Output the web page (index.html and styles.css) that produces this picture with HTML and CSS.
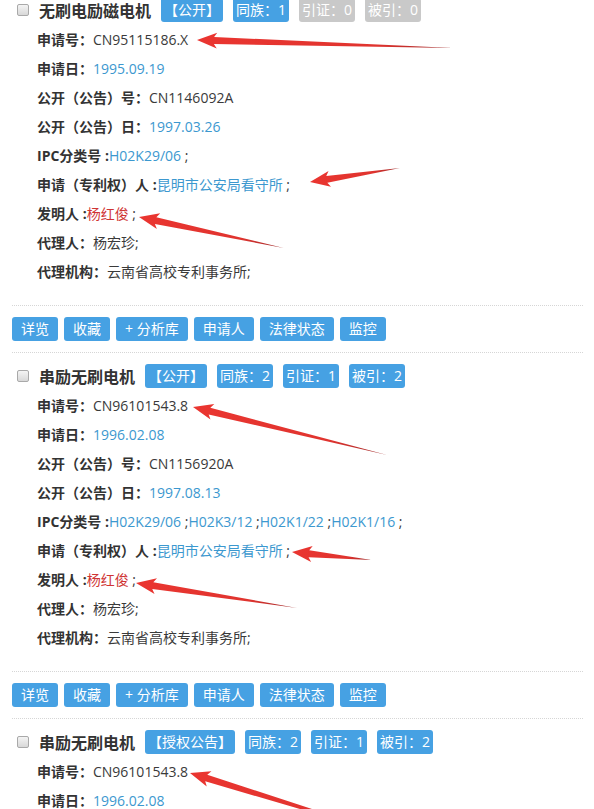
FILE: index.html
```html
<!DOCTYPE html>
<html lang="zh-CN">
<head>
<meta charset="utf-8">
<title>专利检索结果</title>
<link rel="stylesheet" href="styles.css">
</head>
<body>
<div class="page">

  <div class="record">
    <div class="title-row">
      <input type="checkbox" class="pick">
      <span class="title">无刷电励磁电机</span>
      <span class="tag">【公开】</span>
      <span class="tag">同族：1</span>
      <span class="tag off">引证：0</span>
      <span class="tag off">被引：0</span>
    </div>
    <div class="fields">
      <div class="field"><b>申请号：</b><span class="val">CN95115186.X</span></div>
      <div class="field"><b>申请日：</b><span class="link">1995.09.19</span></div>
      <div class="field"><b>公开（公告）号：</b><span class="val">CN1146092A</span></div>
      <div class="field"><b>公开（公告）日：</b><span class="link">1997.03.26</span></div>
      <div class="field"><b>IPC分类号 :</b><span class="link">H02K29/06</span><span class="val"> ;</span></div>
      <div class="field"><b>申请（专利权）人 :</b><span class="link">昆明市公安局看守所</span><span class="val"> ;</span></div>
      <div class="field"><b>发明人 :</b><span class="red">杨红俊</span><span class="val"> ;</span></div>
      <div class="field"><b>代理人：</b><span class="val">杨宏珍;</span></div>
      <div class="field"><b>代理机构：</b><span class="val">云南省高校专利事务所;</span></div>
    </div>
    <div class="actions">
      <button class="btn">详览</button>
      <button class="btn">收藏</button>
      <button class="btn">+ 分析库</button>
      <button class="btn">申请人</button>
      <button class="btn">法律状态</button>
      <button class="btn">监控</button>
    </div>
  </div>

  <div class="record">
    <div class="title-row">
      <input type="checkbox" class="pick">
      <span class="title">串励无刷电机</span>
      <span class="tag">【公开】</span>
      <span class="tag">同族：2</span>
      <span class="tag">引证：1</span>
      <span class="tag">被引：2</span>
    </div>
    <div class="fields">
      <div class="field"><b>申请号：</b><span class="val">CN96101543.8</span></div>
      <div class="field"><b>申请日：</b><span class="link">1996.02.08</span></div>
      <div class="field"><b>公开（公告）号：</b><span class="val">CN1156920A</span></div>
      <div class="field"><b>公开（公告）日：</b><span class="link">1997.08.13</span></div>
      <div class="field"><b>IPC分类号 :</b><span class="link">H02K29/06</span><span class="val"> ;</span><span class="link">H02K3/12</span><span class="val"> ;</span><span class="link">H02K1/22</span><span class="val"> ;</span><span class="link">H02K1/16</span><span class="val"> ;</span></div>
      <div class="field"><b>申请（专利权）人 :</b><span class="link">昆明市公安局看守所</span><span class="val"> ;</span></div>
      <div class="field"><b>发明人 :</b><span class="red">杨红俊</span><span class="val"> ;</span></div>
      <div class="field"><b>代理人：</b><span class="val">杨宏珍;</span></div>
      <div class="field"><b>代理机构：</b><span class="val">云南省高校专利事务所;</span></div>
    </div>
    <div class="actions">
      <button class="btn">详览</button>
      <button class="btn">收藏</button>
      <button class="btn">+ 分析库</button>
      <button class="btn">申请人</button>
      <button class="btn">法律状态</button>
      <button class="btn">监控</button>
    </div>
  </div>

  <div class="record">
    <div class="title-row">
      <input type="checkbox" class="pick">
      <span class="title">串励无刷电机</span>
      <span class="tag">【授权公告】</span>
      <span class="tag">同族：2</span>
      <span class="tag">引证：1</span>
      <span class="tag">被引：2</span>
    </div>
    <div class="fields">
      <div class="field"><b>申请号：</b><span class="val">CN96101543.8</span></div>
      <div class="field"><b>申请日：</b><span class="link">1996.02.08</span></div>
    </div>
  </div>

</div>

<!-- red callout arrows drawn over the list -->
<svg class="marks" width="594" height="809" viewBox="0 0 594 809">
  <defs>
    <linearGradient id="arrowFill" x1="0" y1="0" x2="1" y2="0">
      <stop offset="0" stop-color="#ea3530"/>
      <stop offset="0.7" stop-color="#e0342f"/>
      <stop offset="1" stop-color="#9c2a2a"/>
    </linearGradient>
  </defs>
  <g fill="url(#arrowFill)">
    <g transform="translate(197 40) rotate(1.8)"><polygon points="0,0 20,-8 17,-3.5 256,0 17,3.5 20,8"/></g>
    <g transform="translate(310 182) rotate(-8.8)"><polygon points="0,0 20,-8 17,-3.5 91,0 17,3.5 20,8"/></g>
    <g transform="translate(139 217) rotate(12.1)"><polygon points="0,0 20,-8 17,-3.5 148,0 17,3.5 20,8"/></g>
    <g transform="translate(193 407) rotate(13.9)"><polygon points="0,0 20,-8 17,-3.5 200,0 17,3.5 20,8"/></g>
    <g transform="translate(292 552) rotate(5.7)"><polygon points="0,0 20,-8 17,-3.5 80,0 17,3.5 20,8"/></g>
    <g transform="translate(136 583) rotate(8.8)"><polygon points="0,0 20,-8 17,-3.5 163,0 17,3.5 20,8"/></g>
    <g transform="translate(190 773) rotate(17.2)"><polygon points="0,0 20,-8 17,-3.5 230,0 17,3.5 20,8"/></g>
  </g>
</svg>
</body>
</html>
```

FILE: styles.css
```css
html, body {
  margin: 0;
  padding: 0;
  background: #fff;
}

body {
  position: relative;
  display: flow-root;
  width: 594px;
  height: 809px;
  overflow: hidden;
  font-family: "Open Sans", "Noto Sans CJK SC", sans-serif;
  font-size: 14px;
  color: #3a3a3a;
}

/* the list is scrolled a few pixels past the first title */
.page {
  margin-top: -5px;
}

.record {
  padding: 0 11px 0 12px;
}

.title-row {
  display: flex;
  align-items: center;
  height: 30px;
}

.pick {
  appearance: none;
  -webkit-appearance: none;
  box-sizing: border-box;
  width: 12px;
  height: 12px;
  margin: 0 10px 0 5px;
  border: 1px solid #a9a9a9;
  border-radius: 2px;
  background: linear-gradient(#f4f4f4, #d8d8d8);
}

.title {
  font-family: "Noto Sans CJK SC", sans-serif;
  font-size: 16px;
  font-weight: bold;
  color: #333;
  margin-right: 10px;
}

.tag {
  display: inline-block;
  height: 24px;
  line-height: 24px;
  padding: 0 3px;
  margin-right: 10px;
  border-radius: 3px;
  background: #46a1e3;
  color: #fff;
  font-size: 14px;
  white-space: nowrap;
}

.tag.off {
  background: #c9c9c9;
}

.fields {
  padding-left: 25px;
}

.field {
  height: 29px;
  line-height: 29px;
  white-space: nowrap;
}

.field b {
  color: #333;
  font-weight: bold;
}

.val {
  color: #3a3a3a;
}

.link {
  color: #3c98cf;
}

.red {
  color: #cf3434;
}

.actions {
  display: flex;
  gap: 6px;
  margin-top: 19px;
  margin-bottom: 8px;
  padding: 11px 0;
  border-top: 1px dotted #d6d6d6;
  border-bottom: 1px dotted #d6d6d6;
}

.btn {
  height: 24px;
  padding: 0 9px;
  border: none;
  border-radius: 3px;
  background: #46a1e3;
  color: #fff;
  font-family: "Open Sans", "Noto Sans CJK SC", sans-serif;
  font-size: 14px;
  line-height: 24px;
  cursor: pointer;
}

.marks {
  position: absolute;
  top: 0;
  left: 0;
  pointer-events: none;
}
```
